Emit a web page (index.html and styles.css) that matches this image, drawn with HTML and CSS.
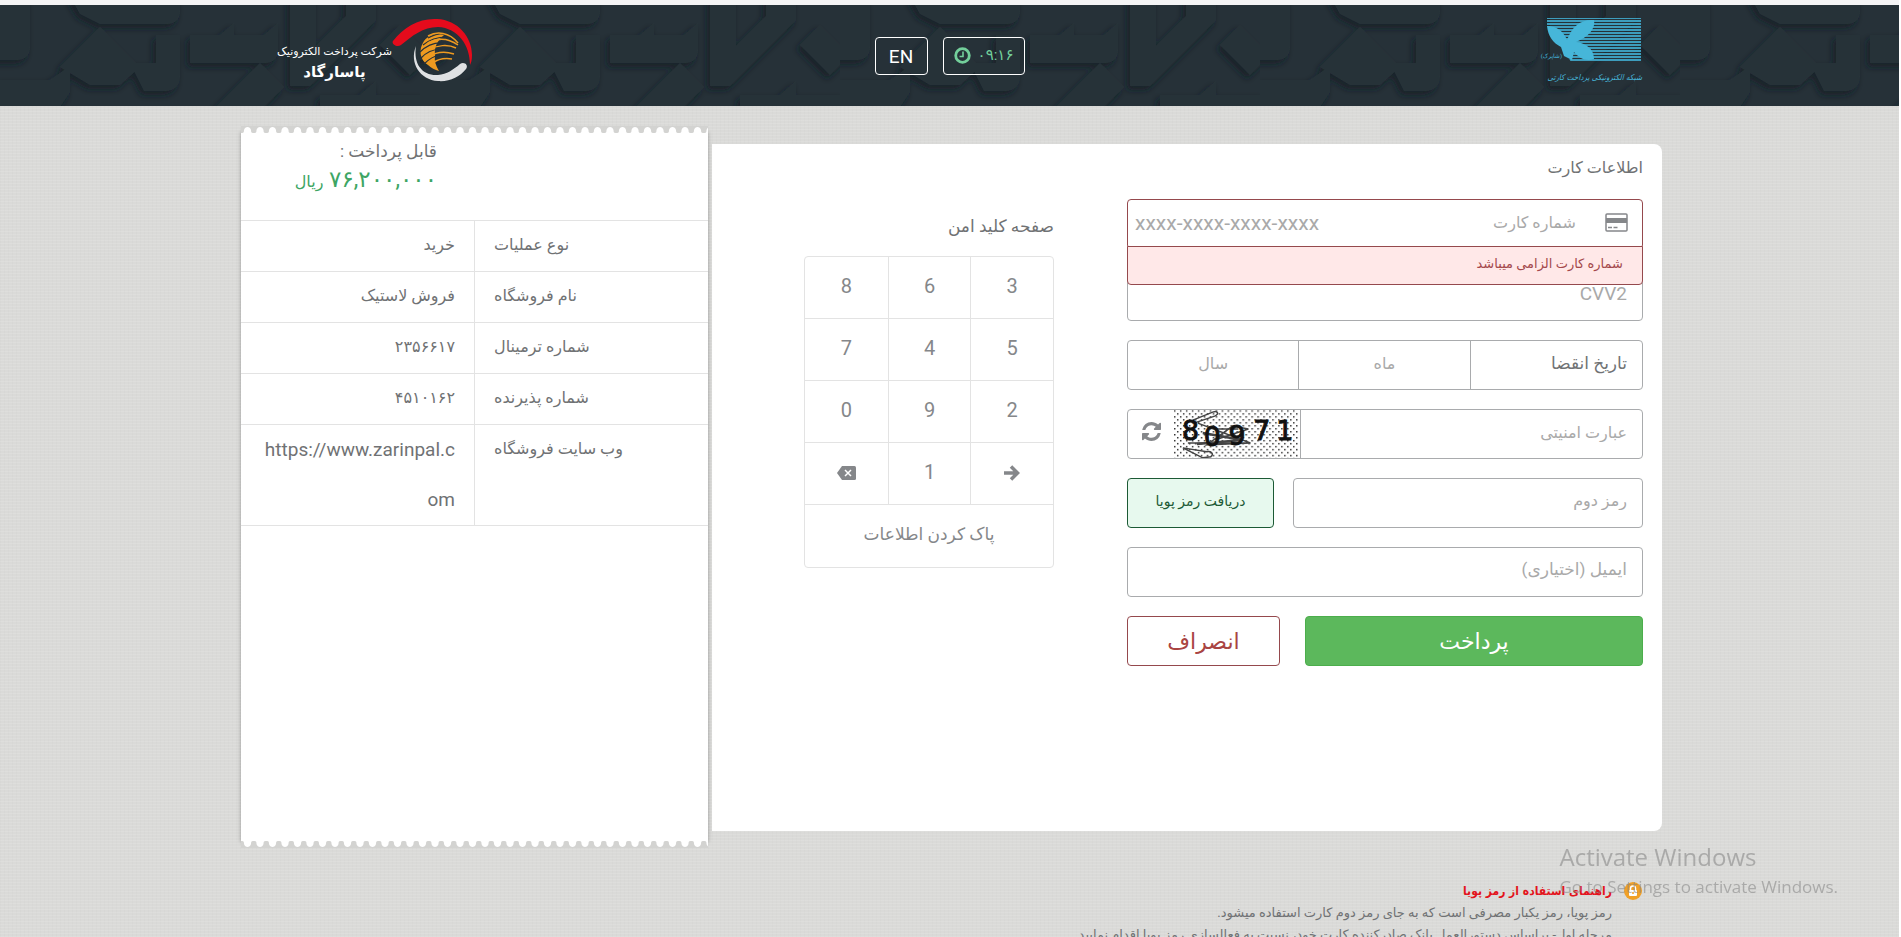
FILE: index.html
```html
<!DOCTYPE html>
<html lang="fa" dir="rtl">
<head>
  <meta charset="UTF-8">
  <meta name="viewport" content="width=device-width, initial-scale=1.0">
  <title>پرداخت الکترونیک پاسارگاد</title>
  <link rel="stylesheet" href="styles.css">
</head>
<body>
  <header class="header">
    <div class="header-inner">
      <div class="shaparak">
        <svg width="102" height="46" viewBox="0 0 102 46" aria-hidden="true">
          <defs>
            <pattern id="lines" width="4" height="3" patternUnits="userSpaceOnUse">
              <rect width="4" height="2" fill="#3d9dbd"/>
            </pattern>
          </defs>
          <path d="M7 1h94v44H31L22 29 7 9z" fill="url(#lines)"/>
          <path d="M7 9c10 0 17 6 20 14C32 10 40 2 54 3c2 9-6 17-18 22 10 1 18 7 18 17-8 3-15-1-20-7l-2 8-8-4-3-9C13 26 8 19 7 9z" fill="#46b6d9"/>
          <text x="22" y="41" class="shaparak-small">(شاپرک)</text>
        </svg>
        <span class="shaparak-name">شبکه الکترونیکی پرداخت کارتی</span>
      </div>
      <div class="header-tools">
        <div class="timer">
          <svg width="17" height="17" viewBox="0 0 17 17" fill="none" stroke="currentColor" aria-hidden="true">
            <circle cx="8.500" cy="8.500" r="6.800" stroke-width="2.800"/>
            <path d="M9 4.500v5H5.500" stroke-width="1.600"/>
          </svg>
          <span>۰۹:۱۶</span>
        </div>
        <button type="button" class="lang">EN</button>
      </div>
      <div class="pasargad">
        <svg width="82" height="66" viewBox="0 0 82 66" aria-hidden="true">
          <path d="M1 24C12 10 27 1 45 2c21 1 35 18 35 36 0 5-1 8-2 10 0-20-12-37-32-38C31 10 20 19 9 28c-4 3-10-1-8-4z" fill="#e50b1c"/>
          <path d="M24 29c-3 19 7 30 22 29 9-1 15-5 22-11 4-3 9 1 6 5-6 8-17 13-28 12-18-1-29-18-22-35z" fill="#dfe1e3"/>
          <path d="M52 18c-8-3-15 0-20 6-6 9-4 19 4 24 3 3 7 5 11 6-3-5-5-10-4-15-1-9 2-15 9-21z" fill="#ee9a20"/>
          <g fill="none" stroke="#263138" stroke-width="1.200">
            <path d="M36 21c7-4 14-5 20-4M31 28c7-6 14-8 24-8M28 35c7-7 14-10 24-9M28 42c6-7 12-10 22-10M32 47c5-5 9-8 16-9"/>
          </g>
          <g fill="none" stroke="#ee9a20" stroke-width="1.500">
            <path d="M36 19c9-5 21-4 30 7M36 26c9-5 20-5 30 2M36 33c9-5 20-6 28-2M37 40c7-5 15-6 25-3M41 46c5-4 12-5 19-4"/>
          </g>
        </svg>
        <div class="pasargad-text">
          <span>شرکت پرداخت الکترونیک</span>
          <strong>پاسارگاد</strong>
        </div>
      </div>
    </div>
  </header>

  <main class="container">
    <section class="payment">
      <form class="card-form">
        <h2 class="title">اطلاعات کارت</h2>

        <div class="field card-number">
          <svg width="23" height="19" viewBox="0 0 23 19" aria-hidden="true">
            <rect x="1" y="1" width="21" height="17" rx="1" fill="none" stroke="#85878a" stroke-width="1.500"/>
            <path d="M1 5h21v5H1z" fill="#85878a"/>
            <path d="M3 14.500h4m1.500 0h4" stroke="#85878a" stroke-width="1.500"/>
          </svg>
          <label for="pan">شماره کارت</label>
          <input id="pan" type="text" dir="ltr" placeholder="xxxx-xxxx-xxxx-xxxx">
          <div class="error">شماره کارت الزامی میباشد</div>
        </div>

        <input class="field cvv" type="text" placeholder="CVV2" aria-label="CVV2">

        <div class="field expire">
          <label for="month">تاریخ انقضا</label>
          <input id="month" type="text" placeholder="ماه">
          <input type="text" placeholder="سال" aria-label="سال">
        </div>

        <div class="field captcha">
          <input type="text" placeholder="عبارت امنیتی" aria-label="عبارت امنیتی">
          <svg class="captcha-image" width="127" height="48" viewBox="0 0 127 48" direction="ltr" role="img" aria-label="80971">
            <defs>
              <pattern id="dots" width="6" height="6" patternUnits="userSpaceOnUse">
                <rect x="0" y="0" width="1.500" height="1.500" fill="#333"/>
                <rect x="3" y="3" width="1.500" height="1.500" fill="#333"/>
              </pattern>
            </defs>
            <rect width="127" height="48" fill="#fff"/>
            <rect width="125" height="48" fill="url(#dots)"/>
            <g fill="none" stroke="#444" stroke-width="1.500">
              <path d="M19 10L39 2c5-2 7 2 2 4L20 13M14 33h62M24 13l53 20-44 2 26-19 16 3-34 11M9 38l20 10 8-1c4-3 0-6-4-5zM40 19h25"/>
              <path d="M29 23l40 7-46 4" stroke-width="2.500"/>
            </g>
            <g class="captcha-digits">
              <text x="8" y="30">8</text>
              <text x="30" y="36">0</text>
              <text x="55" y="35">9</text>
              <text x="80" y="30">7</text>
              <text x="103" y="30">1</text>
            </g>
          </svg>
          <button type="button" class="refresh" aria-label="تصویر جدید">
            <svg width="19" height="19" viewBox="0 0 1536 1536" fill="#85878a" aria-hidden="true">
              <path d="M1511 928q0 5-1 7-64 268-268 434.500T764 1536q-146 0-282.500-55T238 1324l-129 129q-19 19-45 19t-45-19-19-45V960q0-26 19-45t45-19h448q26 0 45 19t19 45-19 45l-137 137q71 66 161 102t187 36q134 0 250-65t186-179q11-17 53-117 8-23 30-23h192q13 0 22.500 9.500t9.500 22.500zM1536 128v448q0 26-19 45t-45 19h-448q-26 0-45-19t-19-45 19-45l138-138Q969 256 768 256q-134 0-250 65T332 500q-11 17-53 117-8 23-30 23H50q-13 0-22.500-9.500T18 608v-7q65-268 270-434.500T768 0q146 0 284 55.500T1297 212l130-129q19-19 45-19t45 19 19 45z"/>
            </svg>
          </button>
        </div>

        <div class="row">
          <input class="field" type="password" placeholder="رمز دوم" aria-label="رمز دوم">
          <button type="button" class="otp">دریافت رمز پویا</button>
        </div>

        <input class="field email" type="email" dir="rtl" placeholder="ایمیل (اختیاری)" aria-label="ایمیل">

        <div class="row actions">
          <button type="submit" class="pay">پرداخت</button>
          <button type="button" class="cancel">انصراف</button>
        </div>
      </form>

      <div class="keypad">
        <h2 class="title">صفحه کلید امن</h2>
        <div class="keys">
          <button type="button">3</button>
          <button type="button">6</button>
          <button type="button">8</button>
          <button type="button">5</button>
          <button type="button">4</button>
          <button type="button">7</button>
          <button type="button">2</button>
          <button type="button">9</button>
          <button type="button">0</button>
          <button type="button" aria-label="بعدی">
            <svg width="16" height="16" viewBox="0 0 16 16" fill="none" stroke="currentColor" stroke-width="3.500" aria-hidden="true">
              <path d="M0 8h13M7 1.500L13.500 8 7 14.500"/>
            </svg>
          </button>
          <button type="button">1</button>
          <button type="button" aria-label="حذف">
            <svg width="19" height="14" viewBox="0 0 19 14" aria-hidden="true">
              <path d="M5 0h12.500Q19 0 19 1.500v11q0 1.500-1.500 1.500H5L0 7z" fill="currentColor"/>
              <path d="M8 4l6 6m0-6l-6 6" stroke="#fff" stroke-width="1.500"/>
            </svg>
          </button>
          <button type="button" class="clear">پاک کردن اطلاعات</button>
        </div>
      </div>
    </section>

    <aside class="receipt">
      <div class="amount">
        <div>قابل پرداخت :</div>
        <div class="price">۷۶,۲۰۰,۰۰۰ <small>ریال</small></div>
      </div>
      <table class="details">
        <tr><th scope="row">نوع عملیات</th><td>خرید</td></tr>
        <tr><th scope="row">نام فروشگاه</th><td>فروش لاستیک</td></tr>
        <tr><th scope="row">شماره ترمینال</th><td>۲۳۵۶۶۱۷</td></tr>
        <tr><th scope="row">شماره پذیرنده</th><td>۴۵۱۰۱۶۲</td></tr>
        <tr><th scope="row">وب سایت فروشگاه</th><td class="site">https://www.zarinpal.com</td></tr>
      </table>
    </aside>
  </main>

  <footer class="help">
    <h3>
      <svg width="18" height="18" viewBox="0 0 18 18" aria-hidden="true">
        <circle cx="9" cy="9" r="9" fill="#f0a027"/>
        <rect x="5" y="8" width="8" height="6" rx="1" fill="#fff"/>
        <path d="M6.500 8V6.500a2.500 2.500 0 0 1 5 0V8" fill="none" stroke="#fff" stroke-width="1.500"/>
        <circle cx="9" cy="11" r="1" fill="#f0a027"/>
      </svg>
      راهنمای استفاده از رمز پویا
    </h3>
    <p>رمز پویا، رمز یکبار مصرفی است که به جای رمز دوم کارت استفاده میشود.</p>
    <p>مرحله اول- براساس دستورالعمل بانک صادرکننده کارت خود، نسبت به فعالسازی رمز پویا اقدام نمایید</p>
  </footer>

  <div class="watermark" dir="ltr">
    <div class="watermark-title">Activate Windows</div>
    <div>Go to Settings to activate Windows.</div>
  </div>
</body>
</html>
```
FILE: styles.css
```css
* {
  box-sizing: border-box;
}
html {
  height: 100%;
  overflow: hidden;
  background: #fff;
}
body {
  min-height: 100%;
  margin: 0 2px 0 0;
  font-family: Roboto, "DejaVu Sans", sans-serif;
  font-size: 16px;
  color: #707274;
  background-color: #dadad8;
  background-image:
    repeating-linear-gradient(0deg, rgba(255, 255, 255, 0.1) 0 1px, transparent 1px 3px),
    repeating-linear-gradient(90deg, rgba(0, 0, 0, 0.01) 0 1px, transparent 1px 4px);
}
input,
button {
  font-family: inherit;
  font-size: 16px;
  color: inherit;
}
button {
  cursor: pointer;
}
h2,
h3,
p {
  margin: 0;
}

/* header */
.header {
  border-top: 5px solid #f4f4f5;
  background-color: #263138;
  background-image: url("data:image/svg+xml,%3Csvg xmlns='http://www.w3.org/2000/svg' width='420' height='101'%3E%3Cfilter id='s' x='-10%25' y='-10%25' width='120%25' height='120%25'%3E%3CfeDropShadow dx='-3' dy='4' stdDeviation='3' flood-color='%23141c21' flood-opacity='.7'/%3E%3C/filter%3E%3Cg fill='%23283339' filter='url(%23s)'%3E%3Cpath d='M-9-9h39v50q0 14-14 14H-9zM70-9h110v14q0 14-14 14H100L80 9zM60 62l40-40 40 40-20 18h-30zM0 75h50l20-14v26L56 108H-9zM130 58h26V30h24v40q0 16-16 16h-20zM190 30h30l14-12v12h30l14-12v26q0 14-14 14h-74zM210 108l50-50 24 24-26 26zM290-9h26v50l30-30V-9h30v24l-66 66h-20zM320 90h40l16-14v14h50v20H320zM380 40l20-20 30 30-20 20z'/%3E%3C/g%3E%3C/svg%3E");
}
.header-inner {
  display: grid;
  grid-template-columns: 1fr auto 1fr;
  align-items: start;
  height: 101px;
  max-width: 1423px;
  margin: 0 auto;
  padding: 12px 19px 0;
}
.shaparak {
  display: flex;
  flex-direction: column;
  align-items: flex-start;
  color: #46b6d9;
}
.shaparak svg {
  overflow: visible;
}
.shaparak-small {
  font-size: 6px;
  fill: #46b6d9;
}
.shaparak-name {
  font-family: "DejaVu Sans Condensed", "DejaVu Sans", sans-serif;
  font-size: 8px;
  font-style: italic;
  line-height: 30px;
  white-space: nowrap;
}
.header-tools {
  display: flex;
  gap: 15px;
  margin-top: 20px;
}
.timer,
.lang {
  display: flex;
  align-items: center;
  justify-content: center;
  height: 38px;
  border: 1px solid #fff;
  border-radius: 4px;
  background: transparent;
}
.timer {
  flex-direction: row-reverse;
  gap: 7px;
  width: 82px;
  padding-bottom: 2px;
  color: #73cf9b;
  font-size: 15px;
}
.lang {
  width: 53px;
  color: #fff;
  font-size: 19px;
}
.pasargad {
  display: flex;
  justify-content: flex-end;
  padding-left: 20px;
}
.pasargad-text {
  display: flex;
  flex-direction: column;
  align-items: center;
  padding-top: 25px;
  color: #fff;
  font-size: 11px;
  line-height: 20px;
  white-space: nowrap;
}
.pasargad-text strong {
  font-size: 15px;
}

/* page */
.container {
  display: grid;
  grid-template-columns: 950fr 467fr;
  gap: 4px;
  max-width: 1425px;
  margin: 0 auto;
  padding: 20px 0 0 4px;
}
.payment {
  display: grid;
  grid-template-columns: minmax(0, 516px) 250px;
  gap: 73px;
  align-items: start;
  min-height: 687px;
  margin: 18px 0 16px;
  padding: 8px 19px;
  background: #fff;
  border-radius: 0 8px 8px 0;
}
.title {
  font-size: 16px;
  font-weight: normal;
  line-height: 32px;
}

/* form */
.card-form {
  display: flex;
  flex-direction: column;
  gap: 19px;
}
.card-form .title {
  margin-bottom: -4px;
}
.field {
  width: 100%;
  height: 50px;
  padding: 0 15px 6px;
  border: 1px solid #a9abad;
  border-radius: 4px;
  background: #fff;
}
.field input {
  min-width: 0;
  height: 100%;
  padding: 0;
  border: 0;
  background: none;
}
::placeholder {
  color: #a9a9a9;
  opacity: 1;
}
.card-number {
  display: flex;
  align-items: center;
  position: relative;
  margin-bottom: 3px;
  padding: 0 14px 3px 7px;
  border-color: #95494d;
}
.card-number label {
  margin-right: 29px;
  color: #a9a9a9;
}
.card-number input {
  flex: 1;
  font-size: 21px;
}
/* message hangs over the next field */
.error {
  position: absolute;
  top: 46px;
  left: -1px;
  right: -1px;
  height: 39px;
  padding: 0 19px;
  border: 1px solid #95494d;
  border-radius: 0 0 4px 4px;
  background: #ffe8e8;
  color: #a4484c;
  font-size: 13px;
  line-height: 34px;
}
.cvv {
  font-size: 19px;
}
.email {
  font-size: 17px;
}
.expire {
  display: grid;
  grid-template-columns: repeat(3, 1fr);
  padding: 0;
}
.expire label {
  padding-right: 15px;
  font-size: 17px;
  line-height: 44px;
}
.expire input {
  padding-bottom: 4px;
  border-right: 1px solid #a9abad;
  text-align: center;
}
.captcha {
  display: flex;
  padding: 0;
}
.captcha input {
  flex: 1;
  padding: 0 15px 4px;
}
.captcha-image {
  border-right: 1px solid #a9abad;
}
.captcha-digits {
  font-family: "DejaVu Sans", sans-serif;
  font-size: 27px;
  fill: #111;
  stroke: #111;
  stroke-width: 1px;
}
.refresh {
  width: 46px;
  padding: 0 0 2px;
  border: 0;
  background: none;
}
.row {
  display: flex;
  gap: 19px;
}
.row .field {
  flex: 1;
  min-width: 0;
}
.otp,
.pay,
.cancel {
  height: 50px;
  padding: 0 0 4px;
  border-radius: 4px;
}
.otp {
  width: 147px;
  border: 1px solid #1c5a35;
  background: #e7f9ee;
  color: #1c5a35;
  font-size: 14px;
}
.actions {
  gap: 25px;
}
.pay,
.cancel {
  padding: 0;
  font-size: 22px;
}
.pay {
  flex: 1;
  border: 1px solid #4cae4c;
  background: #5cb85c;
  color: #fff;
}
.cancel {
  width: 153px;
  border: 1px solid #95494d;
  background: #fff;
  color: #a94442;
}

/* keypad */
.keypad {
  padding-top: 58px;
}
.keypad .title {
  font-size: 17px;
}
.keys {
  display: grid;
  grid-template-columns: repeat(3, 1fr);
  grid-auto-rows: 62px;
  margin-top: 14px;
  border: 1px solid #e3e3e3;
  border-radius: 4px;
}
.keys button {
  padding: 0 0 4px;
  border: 0;
  border-left: 1px solid #e3e3e3;
  border-bottom: 1px solid #e3e3e3;
  background: none;
  color: #85878a;
  font-size: 20px;
}
.keys button:nth-child(3n) {
  border-left: 0;
}
.keys .clear {
  grid-column: 1 / -1;
  border: 0;
  font-size: 17px;
}
.keys svg {
  vertical-align: middle;
}

/* receipt */
.receipt {
  position: relative;
  margin: 6px 0 5px;
  background: #fff;
  box-shadow: 0 0 4px rgba(0, 0, 0, 0.3);
}
/* torn paper edges */
.receipt::before,
.receipt::after {
  content: "";
  position: absolute;
  left: 0;
  right: 0;
  height: 7px;
  background: #d3d3d1 url("data:image/svg+xml,%3Csvg xmlns='http://www.w3.org/2000/svg' width='25' height='7'%3E%3Cg fill='%23fff'%3E%3Cpath d='M1 7c2 0 2-2 2-3 1-4 6-4 7 0 0 1 0 3 2 3z'/%3E%3Cpath d='M13.500 7c2 0 2-2 2-3 1-4 6-4 7 0 0 1 0 3 2 3z'/%3E%3C/g%3E%3C/svg%3E") repeat-x;
}
.receipt::before {
  top: -6px;
}
.receipt::after {
  bottom: -6px;
  transform: scaleY(-1);
}
.amount {
  height: 88px;
  padding: 4px 271px 0 0;
  font-size: 17px;
  line-height: 30px;
  white-space: nowrap;
}
.price {
  color: #3da563;
  font-size: 23px;
  line-height: 28px;
}
.price small {
  font-size: 16px;
}
.details {
  width: 100%;
  table-layout: fixed;
  border-collapse: collapse;
  line-height: 47px;
}
.details tr {
  border-top: 1px solid #e3e3e3;
  border-bottom: 1px solid #e3e3e3;
}
.details th,
.details td {
  padding: 0 19px 3px;
  vertical-align: top;
}
.details th {
  border-left: 1px solid #e3e3e3;
  font-weight: normal;
  text-align: left;
}
.details td {
  text-align: right;
}
.details .site {
  padding-bottom: 0;
  direction: ltr;
  font-size: 19px;
  line-height: 50px;
  word-break: break-all;
}

/* help text */
.help {
  max-width: 1425px;
  margin: 0 auto;
  padding: 33px 50px 0;
  font-size: 13px;
  line-height: 22px;
  white-space: nowrap;
}
.help h3 {
  display: flex;
  align-items: center;
  gap: 12px;
  margin-right: -30px;
  color: #e3141c;
  font-family: "DejaVu Sans Condensed", "DejaVu Sans", sans-serif;
  font-size: 12px;
}
.watermark {
  position: fixed;
  top: 839px;
  right: 63px;
  color: rgba(130, 130, 130, 0.55);
  font-family: "Open Sans", sans-serif;
  font-size: 17px;
  line-height: 24px;
  pointer-events: none;
}
.watermark-title {
  font-size: 24px;
  line-height: 36px;
}
```
